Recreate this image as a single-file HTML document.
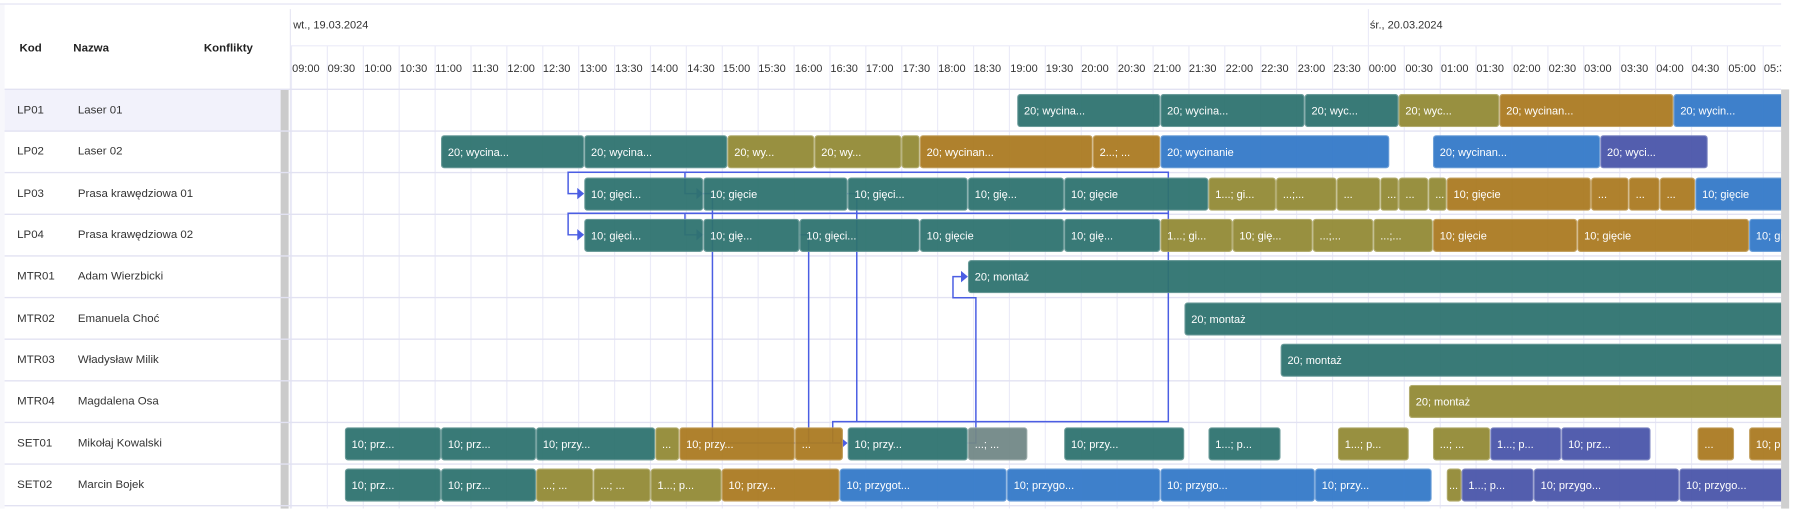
<!DOCTYPE html>
<html><head><meta charset="utf-8">
<style>
html,body{margin:0;padding:0;background:#fff;overflow:hidden;width:1796px;height:508px}
#w{position:absolute;left:0;top:0;width:1568px;height:444px;transform:scale(1.14541);transform-origin:0 0;font-family:"Liberation Sans",sans-serif;color:#333}
.a{position:absolute}
.h{font-weight:bold;font-size:10px;color:#222}
.code,.name{position:absolute;font-size:10px;color:#333;margin-top:1px}
.tl{position:absolute;font-size:9.6px;color:#333;top:55px}
#clip{position:absolute;left:254px;top:78px;width:1301px;height:366px;overflow:hidden}
#in{position:absolute;left:-254px;top:-78px;width:1568px;height:444px}
.b{position:absolute;height:29px;line-height:29px;border-radius:3px;color:#fff;font-size:9.6px;padding-left:5px;box-sizing:border-box;overflow:hidden;white-space:nowrap;border:1px solid rgba(255,255,255,.25);opacity:.95}
.t{background:#2f7370}.o{background:#938b36}.m{background:#ab7b22}.u{background:#347ac9}.i{background:#4a56aa}.g{background:#728887}
</style></head><body><div id="w">
<div class="a" style="left:0;top:3px;width:1568px;height:1px;background:#e2e2f2"></div>
<div class="a" style="left:253px;top:8px;width:1px;height:436px;background:#e6e6f4"></div>
<div class="a" style="left:0;top:4px;width:4px;height:440px;background:#f7f7fb"></div>
<div class="a h" style="left:17px;top:37px">Kod</div>
<div class="a h" style="left:64px;top:37px">Nazwa</div>
<div class="a h" style="left:178px;top:37px">Konflikty</div>
<div class="a" style="left:4px;top:78px;width:241px;height:37px;background:#f2f2fb"></div>
<div class="a" style="left:245px;top:78px;width:7px;height:366px;background:#cbcbcb"></div>
<svg class="a" style="left:0;top:0" width="1568" height="444">
<g stroke="#ececf8" stroke-width="1">
<line x1="254" y1="40" x2="1555" y2="40"/>
</g>
<g stroke="#ebebf8" stroke-width="1">
<line x1="254.5" y1="40" x2="254.5" y2="444"/><line x1="285.8" y1="40" x2="285.8" y2="444"/><line x1="317.2" y1="40" x2="317.2" y2="444"/><line x1="348.5" y1="40" x2="348.5" y2="444"/><line x1="379.9" y1="40" x2="379.9" y2="444"/><line x1="411.2" y1="40" x2="411.2" y2="444"/><line x1="442.5" y1="40" x2="442.5" y2="444"/><line x1="473.9" y1="40" x2="473.9" y2="444"/><line x1="505.2" y1="40" x2="505.2" y2="444"/><line x1="536.6" y1="40" x2="536.6" y2="444"/><line x1="567.9" y1="40" x2="567.9" y2="444"/><line x1="599.2" y1="40" x2="599.2" y2="444"/><line x1="630.6" y1="40" x2="630.6" y2="444"/><line x1="661.9" y1="40" x2="661.9" y2="444"/><line x1="693.3" y1="40" x2="693.3" y2="444"/><line x1="724.6" y1="40" x2="724.6" y2="444"/><line x1="755.9" y1="40" x2="755.9" y2="444"/><line x1="787.3" y1="40" x2="787.3" y2="444"/><line x1="818.6" y1="40" x2="818.6" y2="444"/><line x1="850" y1="40" x2="850" y2="444"/><line x1="881.3" y1="40" x2="881.3" y2="444"/><line x1="912.6" y1="40" x2="912.6" y2="444"/><line x1="944" y1="40" x2="944" y2="444"/><line x1="975.3" y1="40" x2="975.3" y2="444"/><line x1="1006.7" y1="40" x2="1006.7" y2="444"/><line x1="1038" y1="40" x2="1038" y2="444"/><line x1="1069.3" y1="40" x2="1069.3" y2="444"/><line x1="1100.7" y1="40" x2="1100.7" y2="444"/><line x1="1132" y1="40" x2="1132" y2="444"/><line x1="1163.4" y1="40" x2="1163.4" y2="444"/><line x1="1194.7" y1="8" x2="1194.7" y2="444"/><line x1="1226" y1="40" x2="1226" y2="444"/><line x1="1257.4" y1="40" x2="1257.4" y2="444"/><line x1="1288.7" y1="40" x2="1288.7" y2="444"/><line x1="1320.1" y1="40" x2="1320.1" y2="444"/><line x1="1351.4" y1="40" x2="1351.4" y2="444"/><line x1="1382.7" y1="40" x2="1382.7" y2="444"/><line x1="1414.1" y1="40" x2="1414.1" y2="444"/><line x1="1445.4" y1="40" x2="1445.4" y2="444"/><line x1="1476.8" y1="40" x2="1476.8" y2="444"/><line x1="1508.1" y1="40" x2="1508.1" y2="444"/><line x1="1539.4" y1="40" x2="1539.4" y2="444"/>
</g>
<g stroke="#e2e2f2" stroke-width="1.2">
<line x1="4" y1="78" x2="1555" y2="78"/><line x1="4" y1="114.4" x2="1555" y2="114.4"/><line x1="4" y1="150.7" x2="1555" y2="150.7"/><line x1="4" y1="187.1" x2="1555" y2="187.1"/><line x1="4" y1="223.4" x2="1555" y2="223.4"/><line x1="4" y1="259.8" x2="1555" y2="259.8"/><line x1="4" y1="296.1" x2="1555" y2="296.1"/><line x1="4" y1="332.5" x2="1555" y2="332.5"/><line x1="4" y1="368.8" x2="1555" y2="368.8"/><line x1="4" y1="405.2" x2="1555" y2="405.2"/><line x1="4" y1="441.5" x2="1555" y2="441.5"/>
</g>
</svg>
<div class="a" style="left:1555px;top:78px;width:7px;height:366px;background:#cfcfcf"></div>
<div class="a" style="left:256px;top:17px;font-size:9.6px">wt., 19.03.2024</div>
<div class="a" style="left:1196px;top:17px;font-size:9.6px">śr., 20.03.2024</div>
<div class="tl" style="left:255px">09:00</div><div class="tl" style="left:286px">09:30</div><div class="tl" style="left:318px">10:00</div><div class="tl" style="left:349px">10:30</div><div class="tl" style="left:380px">11:00</div><div class="tl" style="left:412px">11:30</div><div class="tl" style="left:443px">12:00</div><div class="tl" style="left:474px">12:30</div><div class="tl" style="left:506px">13:00</div><div class="tl" style="left:537px">13:30</div><div class="tl" style="left:568px">14:00</div><div class="tl" style="left:600px">14:30</div><div class="tl" style="left:631px">15:00</div><div class="tl" style="left:662px">15:30</div><div class="tl" style="left:694px">16:00</div><div class="tl" style="left:725px">16:30</div><div class="tl" style="left:756px">17:00</div><div class="tl" style="left:788px">17:30</div><div class="tl" style="left:819px">18:00</div><div class="tl" style="left:850px">18:30</div><div class="tl" style="left:882px">19:00</div><div class="tl" style="left:913px">19:30</div><div class="tl" style="left:944px">20:00</div><div class="tl" style="left:976px">20:30</div><div class="tl" style="left:1007px">21:00</div><div class="tl" style="left:1038px">21:30</div><div class="tl" style="left:1070px">22:00</div><div class="tl" style="left:1101px">22:30</div><div class="tl" style="left:1133px">23:00</div><div class="tl" style="left:1164px">23:30</div><div class="tl" style="left:1195px">00:00</div><div class="tl" style="left:1227px">00:30</div><div class="tl" style="left:1258px">01:00</div><div class="tl" style="left:1289px">01:30</div><div class="tl" style="left:1321px">02:00</div><div class="tl" style="left:1352px">02:30</div><div class="tl" style="left:1383px">03:00</div><div class="tl" style="left:1415px">03:30</div><div class="tl" style="left:1446px">04:00</div><div class="tl" style="left:1477px">04:30</div><div class="tl" style="left:1509px">05:00</div><div class="tl" style="left:1540px">05:30</div>
<div class="a" style="left:1555px;top:0;width:13px;height:78px;background:#fff"></div>
<div class="code" style="left:15px;top:90px">LP01</div><div class="name" style="left:68px;top:90px">Laser 01</div>
<div class="code" style="left:15px;top:126px">LP02</div><div class="name" style="left:68px;top:126px">Laser 02</div>
<div class="code" style="left:15px;top:163px">LP03</div><div class="name" style="left:68px;top:163px">Prasa krawędziowa 01</div>
<div class="code" style="left:15px;top:199px">LP04</div><div class="name" style="left:68px;top:199px">Prasa krawędziowa 02</div>
<div class="code" style="left:15px;top:235px">MTR01</div><div class="name" style="left:68px;top:235px">Adam Wierzbicki</div>
<div class="code" style="left:15px;top:272px">MTR02</div><div class="name" style="left:68px;top:272px">Emanuela Choć</div>
<div class="code" style="left:15px;top:308px">MTR03</div><div class="name" style="left:68px;top:308px">Władysław Milik</div>
<div class="code" style="left:15px;top:344px">MTR04</div><div class="name" style="left:68px;top:344px">Magdalena Osa</div>
<div class="code" style="left:15px;top:381px">SET01</div><div class="name" style="left:68px;top:381px">Mikołaj Kowalski</div>
<div class="code" style="left:15px;top:417px">SET02</div><div class="name" style="left:68px;top:417px">Marcin Bojek</div>
<div id="clip"><div id="in">
<svg class="a" style="left:0;top:0" width="1568" height="444" fill="none" stroke="#4b5ee3" stroke-width="1.3">
<path d="M598 150.4 H496 V169 H506"/><path d="M598 186.2 H496 V205 H506"/>
<path d="M598 150.4 H1020 V368.1 H727 V386.8 H736"/><path d="M598 186.2 H1020"/>
<path d="M598 150.4 V169 H610"/><path d="M598 186.2 V205 H610"/>
<path d="M614 169 H622 V386.8 H736"/><path d="M698 205 H706 V386.8"/>
<path d="M740 169 H748 V368.1"/>
<path d="M845 386.8 H852 V260 H832 V241.5 H841"/>
<g fill="#4b5ee3" stroke="none"><path d="M504 164 L510 169 L504 174Z"/><path d="M504 200 L510 205 L504 210Z"/><path d="M608 164 L614 169 L608 174Z"/><path d="M608 200 L614 205 L608 210Z"/><path d="M734 382 L740 386.8 L734 392Z"/><path d="M839 236.5 L845 241.5 L839 246.5Z"/></g>
</svg>
<div class="b t" style="left:888px;top:82px;width:125px">20; wycina...</div>
<div class="b t" style="left:1013px;top:82px;width:126px">20; wycina...</div>
<div class="b t" style="left:1139px;top:82px;width:82px">20; wyc...</div>
<div class="b o" style="left:1221px;top:82px;width:88px">20; wyc...</div>
<div class="b m" style="left:1309px;top:82px;width:152px">20; wycinan...</div>
<div class="b u" style="left:1461px;top:82px;width:100px">20; wycin...</div>
<div class="b t" style="left:385px;top:118px;width:125px">20; wycina...</div>
<div class="b t" style="left:510px;top:118px;width:125px">20; wycina...</div>
<div class="b o" style="left:635px;top:118px;width:76px">20; wy...</div>
<div class="b o" style="left:711px;top:118px;width:76px">20; wy...</div>
<div class="b o" style="left:787px;top:118px;width:16px"></div>
<div class="b m" style="left:803px;top:118px;width:151px">20; wycinan...</div>
<div class="b m" style="left:954px;top:118px;width:59px">2...; ...</div>
<div class="b u" style="left:1013px;top:118px;width:200px">20; wycinanie</div>
<div class="b u" style="left:1251px;top:118px;width:146px">20; wycinan...</div>
<div class="b i" style="left:1397px;top:118px;width:94px">20; wyci...</div>
<div class="b t" style="left:510px;top:155px;width:104px">10; gięci...</div>
<div class="b t" style="left:614px;top:155px;width:126px">10; gięcie</div>
<div class="b t" style="left:740px;top:155px;width:105px">10; gięci...</div>
<div class="b t" style="left:845px;top:155px;width:84px">10; gię...</div>
<div class="b t" style="left:929px;top:155px;width:126px">10; gięcie</div>
<div class="b o" style="left:1055px;top:155px;width:59px">1...; gi...</div>
<div class="b o" style="left:1114px;top:155px;width:53px">...;...</div>
<div class="b o" style="left:1167px;top:155px;width:38px">...</div>
<div class="b o" style="left:1205px;top:155px;width:16px">...</div>
<div class="b o" style="left:1221px;top:155px;width:26px">...</div>
<div class="b o" style="left:1247px;top:155px;width:16px">...</div>
<div class="b m" style="left:1263px;top:155px;width:126px">10; gięcie</div>
<div class="b m" style="left:1389px;top:155px;width:33px">...</div>
<div class="b m" style="left:1422px;top:155px;width:27px">...</div>
<div class="b m" style="left:1449px;top:155px;width:31px">...</div>
<div class="b u" style="left:1480px;top:155px;width:90px">10; gięcie</div>
<div class="b t" style="left:510px;top:191px;width:104px">10; gięci...</div>
<div class="b t" style="left:614px;top:191px;width:84px">10; gię...</div>
<div class="b t" style="left:698px;top:191px;width:105px">10; gięci...</div>
<div class="b t" style="left:803px;top:191px;width:126px">10; gięcie</div>
<div class="b t" style="left:929px;top:191px;width:84px">10; gię...</div>
<div class="b o" style="left:1013px;top:191px;width:63px">1...; gi...</div>
<div class="b o" style="left:1076px;top:191px;width:70px">10; gię...</div>
<div class="b o" style="left:1146px;top:191px;width:53px">...;...</div>
<div class="b o" style="left:1199px;top:191px;width:52px">...;...</div>
<div class="b m" style="left:1251px;top:191px;width:126px">10; gięcie</div>
<div class="b m" style="left:1377px;top:191px;width:150px">10; gięcie</div>
<div class="b u" style="left:1527px;top:191px;width:50px">10; gi</div>
<div class="b t" style="left:845px;top:227px;width:730px">20; montaż</div>
<div class="b t" style="left:1034px;top:264px;width:540px">20; montaż</div>
<div class="b t" style="left:1118px;top:300px;width:460px">20; montaż</div>
<div class="b o" style="left:1230px;top:336px;width:340px">20; montaż</div>
<div class="b t" style="left:301px;top:373px;width:84px">10; prz...</div>
<div class="b t" style="left:385px;top:373px;width:83px">10; prz...</div>
<div class="b t" style="left:468px;top:373px;width:104px">10; przy...</div>
<div class="b o" style="left:572px;top:373px;width:21px">...</div>
<div class="b m" style="left:593px;top:373px;width:101px">10; przy...</div>
<div class="b m" style="left:694px;top:373px;width:42px">...</div>
<div class="b t" style="left:740px;top:373px;width:105px">10; przy...</div>
<div class="b g" style="left:845px;top:373px;width:52px">...; ...</div>
<div class="b t" style="left:929px;top:373px;width:105px">10; przy...</div>
<div class="b t" style="left:1055px;top:373px;width:63px">1...; p...</div>
<div class="b o" style="left:1168px;top:373px;width:62px">1...; p...</div>
<div class="b o" style="left:1251px;top:373px;width:50px">...; ...</div>
<div class="b i" style="left:1301px;top:373px;width:62px">1...; p...</div>
<div class="b i" style="left:1363px;top:373px;width:78px">10; prz...</div>
<div class="b m" style="left:1482px;top:373px;width:32px">...</div>
<div class="b m" style="left:1527px;top:373px;width:50px">10; p</div>
<div class="b t" style="left:301px;top:409px;width:84px">10; prz...</div>
<div class="b t" style="left:385px;top:409px;width:83px">10; prz...</div>
<div class="b o" style="left:468px;top:409px;width:50px">...; ...</div>
<div class="b o" style="left:518px;top:409px;width:50px">...; ...</div>
<div class="b o" style="left:568px;top:409px;width:62px">1...; p...</div>
<div class="b m" style="left:630px;top:409px;width:103px">10; przy...</div>
<div class="b u" style="left:733px;top:409px;width:146px">10; przygot...</div>
<div class="b u" style="left:879px;top:409px;width:134px">10; przygo...</div>
<div class="b u" style="left:1013px;top:409px;width:135px">10; przygo...</div>
<div class="b u" style="left:1148px;top:409px;width:102px">10; przy...</div>
<div class="b o" style="left:1263px;top:409px;width:13px;padding-left:1px">...</div>
<div class="b i" style="left:1276px;top:409px;width:63px">1...; p...</div>
<div class="b i" style="left:1339px;top:409px;width:127px">10; przygo...</div>
<div class="b i" style="left:1466px;top:409px;width:110px">10; przygo...</div>
</div></div>
</div></body></html>
